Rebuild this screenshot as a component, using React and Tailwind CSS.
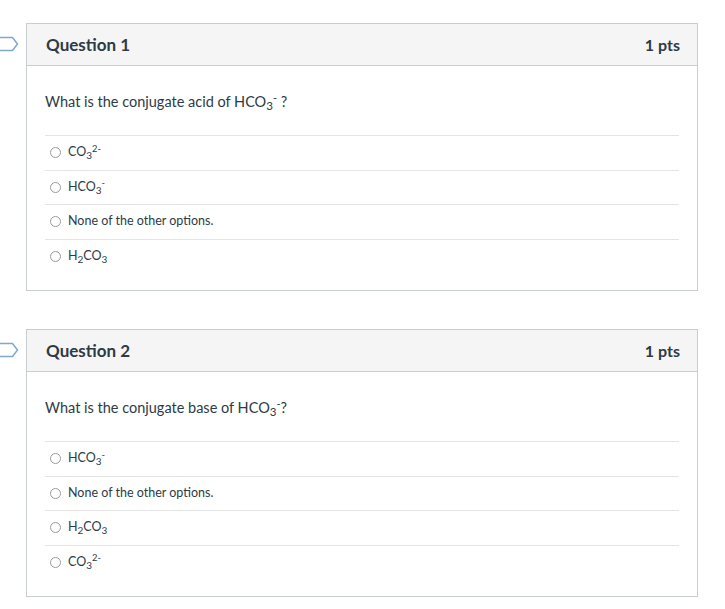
import React from "react";

const Radio = () => (
  <span className="inline-block w-[11px] h-[11px] rounded-full border border-[#9a9a9a] bg-white shrink-0" />
);

const Bookmark = () => (
  <svg width="19" height="16" viewBox="0 0 19 16" className="shrink-0">
    <path d="M-2 1.5 H12.5 L17.5 8 L12.5 14.5 H-2" fill="white" stroke="#7ea7d6" strokeWidth="1.5" />
  </svg>
);

const Sub = ({ children }) => <sub className="text-[0.8em] relative top-[0.3em] align-baseline leading-none">{children}</sub>;
const Sup = ({ children }) => <sup className="text-[0.75em] relative -top-[0.5em] align-baseline leading-none">{children}</sup>;

const CO3 = () => (<span>CO<Sub>3</Sub><Sup>2-</Sup></span>);
const HCO3 = () => (<span>HCO<Sub>3</Sub><Sup>-</Sup></span>);
const H2CO3 = () => (<span>H<Sub>2</Sub>CO<Sub>3</Sub></span>);
const None = () => (<span>None of the other options.</span>);

function Question({ num, text, options }) {
  return (
    <div className="flex items-start">
      <div className="w-[26px] shrink-0 pt-[13px]">
        <Bookmark />
      </div>
      <div className="w-[672px] border border-[#c7cdd1] bg-white">
        <div className="h-[42px] bg-[#f5f5f5] border-b border-[#c7cdd1] flex items-center justify-between pl-[19px] pr-[17px]">
          <span className="text-[17px] font-bold text-[#2d3b45]">Question {num}</span>
          <span className="text-[16px] font-bold text-[#2d3b45]">1 pts</span>
        </div>
        <div className="px-[18px] pt-[26px] pb-[17px]">
          <div className="text-[14.5px] leading-[20px] text-[#2d3b45] h-[20px] mb-[23px]">{text}</div>
          <div>
            {options.map((O, i) => (
              <div key={i} className="border-t border-[#e4e4e4] h-[34.5px] flex items-center gap-[7px] pl-[5px] text-[12.5px] text-[#2d3b45]">
                <Radio />
                <O />
              </div>
            ))}
          </div>
        </div>
      </div>
    </div>
  );
}

export default function App() {
  return (
    <div className="w-[725px] h-[609px] bg-white pt-[23px] flex flex-col gap-[38px]" style={{ fontFamily: "Lato, 'Liberation Sans', sans-serif" }}>
      <Question
        num={1}
        text={<span>What is the conjugate acid of HCO<Sub>3</Sub><Sup>-</Sup> ?</span>}
        options={[CO3, HCO3, None, H2CO3]}
      />
      <Question
        num={2}
        text={<span>What is the conjugate base of HCO<Sub>3</Sub><Sup>-</Sup>?</span>}
        options={[HCO3, None, H2CO3, CO3]}
      />
    </div>
  );
}
